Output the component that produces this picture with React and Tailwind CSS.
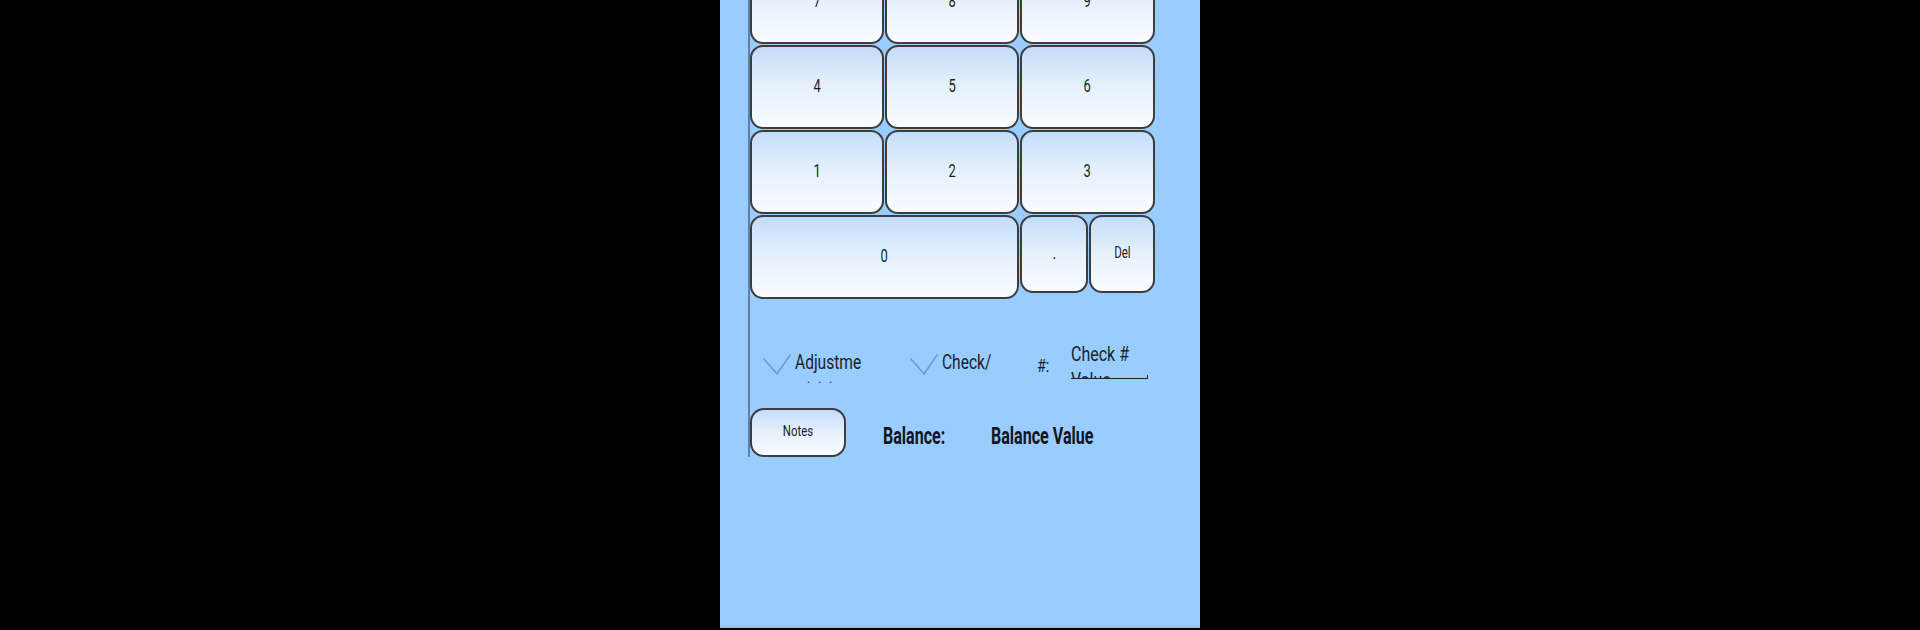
import React from "react";

const font = { fontFamily: "Roboto, 'Noto Sans', sans-serif" };

function Key({ label, className = "", textClass = "text-[18px]" }) {
  return (
    <div
      className={`flex items-center justify-center rounded-[13px] border-2 border-[#3d3d3d] bg-linear-to-b from-[#c4ddfa] via-[#e6f1fd] to-[#f9fcff] pb-[3px] text-[#1e1e1e] ${className}`}
    >
      <span className={`inline-block scale-x-[0.72] ${textClass}`}>{label}</span>
    </div>
  );
}

function Chevron({ className = "" }) {
  return (
    <svg
      width="28"
      height="21"
      viewBox="0 0 28 21"
      className={className}
      fill="none"
      stroke="#6a99c8"
      strokeWidth="1.5"
    >
      <polyline points="0.5,4.5 14,20 27.5,0.5" />
    </svg>
  );
}

export default function App() {
  const digits = ["7", "8", "9", "4", "5", "6", "1", "2", "3"];
  return (
    <div className="flex h-[630px] w-full justify-center bg-black" style={font}>
      <div className="box-border h-[628px] w-[480px] overflow-hidden border-b-2 border-[#a3bbd3] bg-[#99ccff]">
        <div className="ml-[28px] w-[407px] border-l-2 border-[#5e80a6]">
          {/* keypad, scrolled so the top row is partly hidden */}
          <div className="-mt-[40px] grid grid-cols-[134px_134px_135px] auto-rows-[84px] gap-[1px]">
            {digits.map((d) => (
              <Key key={d} label={d} />
            ))}
            <Key label="0" className="col-span-2" />
            <div className="flex gap-[1px]">
              <Key label="." className="h-[78px] w-[68px]" />
              <Key label="Del" className="h-[78px] flex-1" textClass="text-[16px]" />
            </div>
          </div>

          {/* options row */}
          <div className="mt-[41px] flex h-[40px] items-start text-[#1a1f2b]">
            <div className="ml-[13px] flex w-[147px] items-start">
              <Chevron className="mt-[14px] shrink-0" />
              <div className="ml-[4px] mt-[9px]">
                <span className="block origin-left scale-x-[0.74] whitespace-nowrap text-[21px] leading-[26px]">
                  Adjustme
                </span>
                <div className="pl-[12px] text-[12px] leading-[8px] tracking-[8px] text-[#333]">...</div>
              </div>
            </div>
            <div className="flex w-[127px] items-start">
              <Chevron className="mt-[14px] shrink-0" />
              <span className="ml-[4px] mt-[9px] block origin-left scale-x-[0.74] whitespace-nowrap text-[21px] leading-[26px]">
                Check/
              </span>
            </div>
            <div className="mt-[16px] w-[34px] text-[18px] leading-[20px]">
              <span className="inline-block origin-left scale-x-[0.8]">#:</span>
            </div>
            <div className="relative mt-[1px] h-[38px] w-[77px] overflow-hidden">
              <span className="block origin-left scale-x-[0.8] whitespace-nowrap text-[20px] leading-[26px]">
                Check #
              </span>
              <span className="block origin-left scale-x-[0.8] whitespace-nowrap text-[20px] leading-[26px]">
                Value
              </span>
              <div className="absolute bottom-[0px] left-0 right-0 h-[4px] border-b-[1.5px] border-r-[1.5px] border-[#222]" />
            </div>
          </div>

          {/* notes and balance */}
          <div className="mt-[28px] flex items-start">
            <div className="flex h-[49px] w-[96px] items-center justify-center rounded-[14px] border-2 border-[#3d3d3d] bg-linear-to-b from-[#c4ddfa] via-[#e6f1fd] to-[#f9fcff] pb-[2px] text-[#1e1e1e]">
              <span className="inline-block scale-x-[0.76] text-[15px]">Notes</span>
            </div>
            <div className="ml-[37px] mt-[14px] w-[108px] text-[24px] font-bold leading-[28px] text-[#111522]">
              <span className="inline-block origin-left scale-x-[0.67] whitespace-nowrap">Balance:</span>
            </div>
            <div className="mt-[14px] text-[24px] font-bold leading-[28px] text-[#111522]">
              <span className="inline-block origin-left scale-x-[0.67] whitespace-nowrap">Balance Value</span>
            </div>
          </div>
        </div>
      </div>
    </div>
  );
}
